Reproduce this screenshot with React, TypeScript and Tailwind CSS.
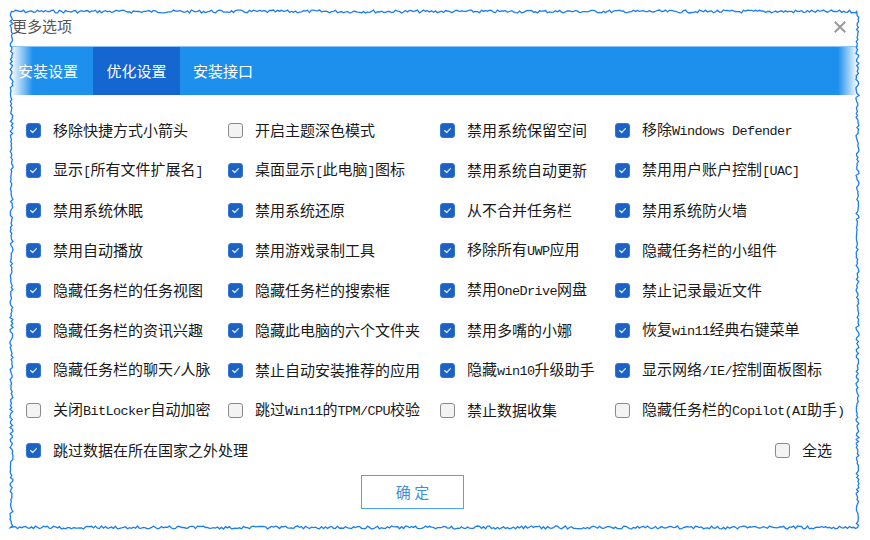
import React from "react";

const CJK = '"Noto Sans CJK SC", "Noto Sans", sans-serif';

type Item = { t: string; c: boolean };

const rows: Item[][] = [
  [
    { t: "移除快捷方式小箭头", c: true },
    { t: "开启主题深色模式", c: false },
    { t: "禁用系统保留空间", c: true },
    { t: "移除Windows Defender", c: true },
  ],
  [
    { t: "显示[所有文件扩展名]", c: true },
    { t: "桌面显示[此电脑]图标", c: true },
    { t: "禁用系统自动更新", c: true },
    { t: "禁用用户账户控制[UAC]", c: true },
  ],
  [
    { t: "禁用系统休眠", c: true },
    { t: "禁用系统还原", c: true },
    { t: "从不合并任务栏", c: true },
    { t: "禁用系统防火墙", c: true },
  ],
  [
    { t: "禁用自动播放", c: true },
    { t: "禁用游戏录制工具", c: true },
    { t: "移除所有UWP应用", c: true },
    { t: "隐藏任务栏的小组件", c: true },
  ],
  [
    { t: "隐藏任务栏的任务视图", c: true },
    { t: "隐藏任务栏的搜索框", c: true },
    { t: "禁用OneDrive网盘", c: true },
    { t: "禁止记录最近文件", c: true },
  ],
  [
    { t: "隐藏任务栏的资讯兴趣", c: true },
    { t: "隐藏此电脑的六个文件夹", c: true },
    { t: "禁用多嘴的小娜", c: true },
    { t: "恢复win11经典右键菜单", c: true },
  ],
  [
    { t: "隐藏任务栏的聊天/人脉", c: true },
    { t: "禁止自动安装推荐的应用", c: true },
    { t: "隐藏win10升级助手", c: true },
    { t: "显示网络/IE/控制面板图标", c: true },
  ],
  [
    { t: "关闭BitLocker自动加密", c: false },
    { t: "跳过Win11的TPM/CPU校验", c: false },
    { t: "禁止数据收集", c: false },
    { t: "隐藏任务栏的Copilot(AI助手)", c: false },
  ],
];

function Label({ text }: { text: string }) {
  const parts = text.split(/([\x00-\x7F]+)/).filter((p) => p.length > 0);
  return (
    <span className="text-[15px] leading-[20px] text-[#1a1a1a] whitespace-pre" style={{ fontFamily: CJK }}>
      {parts.map((p, i) =>
        /^[\x00-\x7F]+$/.test(p) ? (
          <span key={i} className="text-[13.5px] tracking-[-0.6px] font-['Liberation_Mono',monospace] text-[#1a1a1a]">
            {p}
          </span>
        ) : (
          <span key={i}>{p}</span>
        )
      )}
    </span>
  );
}

function Box({ checked }: { checked: boolean }) {
  if (checked) {
    return (
      <span className="w-[15px] h-[15px] rounded-[3px] bg-[#1c62c5] border border-[#3574cf] flex items-center justify-center shrink-0">
        <svg width="11" height="11" viewBox="0 0 11 11">
          <path d="M2.6 5.6 L4.7 7.5 L8.4 3.6" fill="none" stroke="#d9e6f8" strokeWidth="1.3" strokeLinecap="round" strokeLinejoin="round" />
        </svg>
      </span>
    );
  }
  return <span className="w-[15px] h-[15px] rounded-[3px] bg-[#f3f3f3] border-[1.5px] border-[#8a8a8a] shrink-0" />;
}

function Opt({ it }: { it: Item }) {
  return (
    <div className="flex items-center gap-[12px] h-[40px]">
      <Box checked={it.c} />
      <Label text={it.t} />
    </div>
  );
}

function jagged(): string {
  const L = 11.5, T = 11.5, R = 857.5, B = 527.5;
  let seed = 7;
  const rnd = () => {
    seed = (seed * 9301 + 49297) % 233280;
    return seed / 233280;
  };
  const j = () => (rnd() - 0.5) * 3;
  const pts: string[] = [];
  for (let x = L; x < R; x += 2) pts.push(`${x.toFixed(1)},${(T + j()).toFixed(1)}`);
  for (let y = T; y < B; y += 2) pts.push(`${(R + j()).toFixed(1)},${y.toFixed(1)}`);
  for (let x = R; x > L; x -= 2) pts.push(`${x.toFixed(1)},${(B + j()).toFixed(1)}`);
  for (let y = B; y > T; y -= 2) pts.push(`${(L + j()).toFixed(1)},${y.toFixed(1)}`);
  return pts.join(" ");
}

export default function App() {
  const pts = jagged();
  return (
    <div className="relative w-[870px] h-[540px] bg-white overflow-hidden" style={{ fontFamily: CJK }}>
      <div className="ml-[11px] mt-[11px] w-[847px] h-[517px] bg-white flex flex-col">
        {/* title bar */}
        <div className="h-[35px] flex items-center justify-between pb-[4px]">
          <span className="pl-[1px] text-[15px] text-[#555555]">更多选项</span>
          <svg width="12" height="12" viewBox="0 0 12 12" className="mr-[12px]">
            <path d="M1.5 1.5 L10.5 10.5 M10.5 1.5 L1.5 10.5" stroke="#9a9a9a" strokeWidth="2" strokeLinecap="square" />
          </svg>
        </div>
        {/* tabs */}
        <div className="h-[49px] flex items-stretch border-t border-[#8cc4f3] bg-[linear-gradient(90deg,#ffffff_0px,#1d8fed_22px,#1d8fed_calc(100%-20px),#ffffff_100%)]">
          <div className="pl-[7px] pr-[15px] flex items-center text-[15px] text-white">安装设置</div>
          <div className="w-[87px] flex items-center justify-center text-[15px] text-white bg-[#1666d2]">优化设置</div>
          <div className="px-[13px] flex items-center text-[15px] text-white">安装接口</div>
        </div>
        {/* options */}
        <div className="pt-[15px] pl-[15px]">
          <div className="grid grid-cols-[202px_212px_175px_1fr]">
            {rows.map((r, ri) => r.map((it, ci) => <Opt key={`${ri}-${ci}`} it={it} />))}
          </div>
          <div className="flex items-center justify-between pr-[26px]">
            <Opt it={{ t: "跳过数据在所在国家之外处理", c: true }} />
            <Opt it={{ t: "全选", c: false }} />
          </div>
        </div>
        <div className="mt-[5px] pl-[350px]">
          <button className="w-[103px] h-[34px] border-[1.5px] border-[#4aa6f2] bg-white text-[15px] text-[#3b8fe2] flex items-center justify-center whitespace-pre">
            确 定
          </button>
        </div>
      </div>
      <svg className="absolute left-0 top-0 pointer-events-none" width="870" height="540" viewBox="0 0 870 540">
        <polygon points={pts} fill="none" stroke="#1a7ef2" strokeWidth="1.3" />
      </svg>
    </div>
  );
}
